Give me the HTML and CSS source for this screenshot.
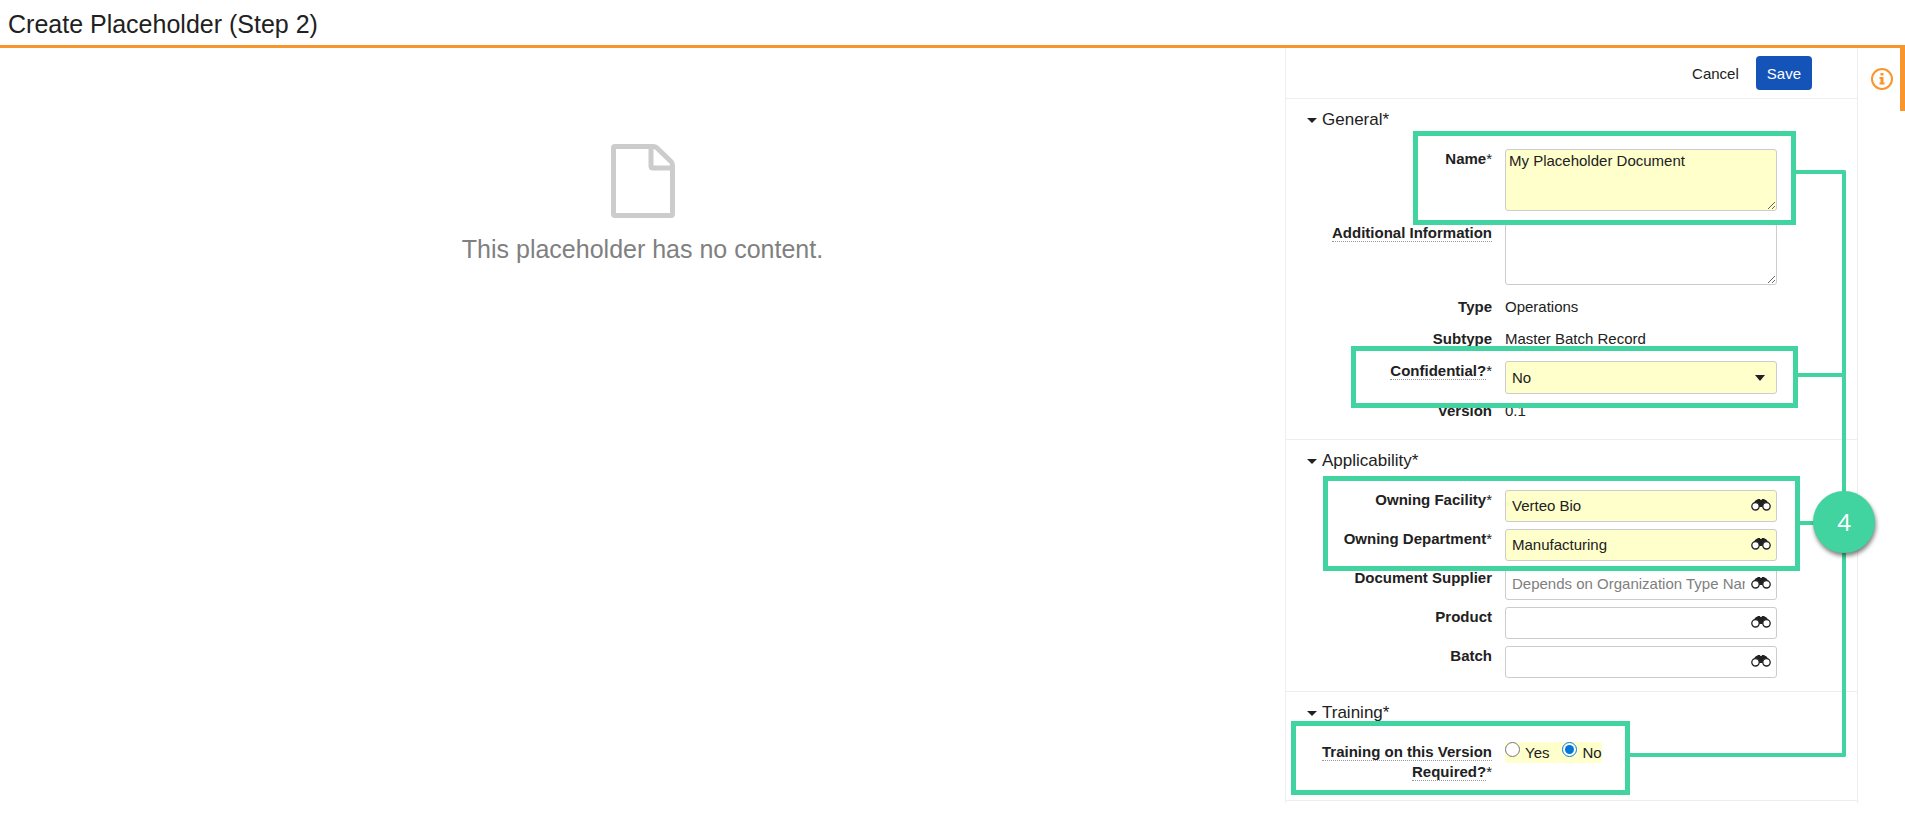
FILE: index.html
```
<!DOCTYPE html>
<html lang="en">
<head>
    <meta charset="UTF-8">
    <meta name="viewport" content="width=device-width, initial-scale=1.0">
    <title>Create Placeholder</title>
    <link rel="stylesheet" href="styles.css">
</head>
<body>
    <svg class="sprite" aria-hidden="true">
        <symbol id="binoculars" viewBox="0 0 20 12">
            <path d="M2.500 4 L4.500 1.500 Q5.500 0.800 6 0.800 L7 0 H9 L9.400 1 H10.600 L11 0 H13 L14 0.800 Q14.500 0.800 15.500 1.500 L17.500 4 L12 5 V8 H8 V5 Z"/>
            <circle cx="4.500" cy="7.300" r="3.700" fill="white" stroke="#212121" stroke-width="1.300"/>
            <circle cx="15.500" cy="7.300" r="3.700" fill="white" stroke="#212121" stroke-width="1.300"/>
        </symbol>
    </svg>

    <header class="page-header">
        <h1>Create Placeholder (Step 2)</h1>
    </header>

    <div class="page">
        <main class="viewer">
            <svg class="doc-icon" viewBox="0 0 64 74" width="64" height="74" aria-hidden="true">
                <path d="M4 2.500 H42 Q44.500 2.500 46 4 L60 17.500 Q61.500 19 61.500 21 V70 Q61.500 71.500 60 71.500 H4 Q2.500 71.500 2.500 70 V4 Q2.500 2.500 4 2.500 Z"/>
                <path d="M40 3 V22 Q40 24 42 24 H61"/>
            </svg>
            <p>This placeholder has no content.</p>
        </main>

        <form class="panel">
            <div class="actions">
                <button type="button" class="btn">Cancel</button>
                <button type="button" class="btn btn-save">Save</button>
            </div>

            <section class="section">
                <h2>General*</h2>
                <div class="row">
                    <label class="label" for="name">Name<i>*</i></label>
                    <textarea id="name" class="control required">My Placeholder Document</textarea>
                </div>
                <div class="row">
                    <label class="label" for="info"><span class="hint">Additional Information</span></label>
                    <textarea id="info" class="control"></textarea>
                </div>
                <div class="row">
                    <span class="label">Type</span>
                    <span class="value">Operations</span>
                </div>
                <div class="row">
                    <span class="label">Subtype</span>
                    <span class="value">Master Batch Record</span>
                </div>
                <div class="row">
                    <label class="label" for="confidential"><span class="hint">Confidential?</span><i>*</i></label>
                    <div class="select">
                        <select id="confidential" class="control required">
                            <option>No</option>
                            <option>Yes</option>
                        </select>
                    </div>
                </div>
                <div class="row">
                    <span class="label">Version</span>
                    <span class="value">0.1</span>
                </div>
            </section>

            <section class="section">
                <h2>Applicability*</h2>
                <div class="row">
                    <label class="label" for="facility">Owning Facility<i>*</i></label>
                    <div class="lookup">
                        <input type="text" id="facility" class="control required" value="Verteo Bio">
                        <button type="button" aria-label="Search"><svg><use href="#binoculars"/></svg></button>
                    </div>
                </div>
                <div class="row">
                    <label class="label" for="department">Owning Department<i>*</i></label>
                    <div class="lookup">
                        <input type="text" id="department" class="control required" value="Manufacturing">
                        <button type="button" aria-label="Search"><svg><use href="#binoculars"/></svg></button>
                    </div>
                </div>
                <div class="row">
                    <label class="label" for="supplier">Document Supplier</label>
                    <div class="lookup">
                        <input type="text" id="supplier" class="control" placeholder="Depends on Organization Type Name">
                        <button type="button" aria-label="Search"><svg><use href="#binoculars"/></svg></button>
                    </div>
                </div>
                <div class="row">
                    <label class="label" for="product">Product</label>
                    <div class="lookup">
                        <input type="text" id="product" class="control">
                        <button type="button" aria-label="Search"><svg><use href="#binoculars"/></svg></button>
                    </div>
                </div>
                <div class="row">
                    <label class="label" for="batch">Batch</label>
                    <div class="lookup">
                        <input type="text" id="batch" class="control">
                        <button type="button" aria-label="Search"><svg><use href="#binoculars"/></svg></button>
                    </div>
                </div>
            </section>

            <section class="section">
                <h2>Training*</h2>
                <div class="row" role="radiogroup" aria-labelledby="training-label">
                    <span class="label" id="training-label"><span class="hint">Training on this Version</span> <span class="hint">Required?</span><i>*</i></span>
                    <div class="radios">
                        <label><input type="radio" name="training">Yes</label>
                        <label><input type="radio" name="training" checked>No</label>
                    </div>
                </div>
            </section>

            <!-- step callouts -->
            <div class="line line-main"></div>
            <div class="line line-confidential"></div>
            <div class="line line-owning"></div>
            <div class="box box-name"></div>
            <div class="box box-confidential"></div>
            <div class="box box-owning"></div>
            <div class="box box-training"></div>
            <div class="line line-training"></div>
            <div class="step">4</div>
        </form>

        <aside class="rail">
            <button type="button" class="info" aria-label="Information">
                <svg viewBox="0 0 22 22" width="22" height="22">
                    <circle cx="11" cy="11" r="10"/>
                    <path d="M9.500 5 H12.500 V7.500 H9.500 Z M8.500 9 H12.500 V14.500 H13.500 V16.500 H8.500 V14.500 H9.500 V11 H8.500 Z"/>
                </svg>
            </button>
        </aside>
    </div>
</body>
</html>
```
FILE: styles.css
```
* {
    box-sizing: border-box;
}
body {
    margin: 0;
    font-family: Arial, "Liberation Sans", sans-serif;
    font-size: 15px;
    line-height: 20px;
    color: #212121;
    background: white;
}
button, input, select, textarea {
    font: inherit;
    color: inherit;
}
button {
    padding: 0;
    border: none;
    background: none;
    cursor: pointer;
}
.sprite {
    display: none;
}
.page-header {
    padding: 10px 8px 7px;
    border-bottom: 3px solid #f8962d;
}
.page-header h1 {
    margin: 0;
    font-size: 25px;
    line-height: 28px;
    font-weight: normal;
}
.page {
    display: flex;
    align-items: flex-start;
}
.viewer {
    flex: 1;
    padding-top: 96px;
    text-align: center;
    font-size: 25px;
    line-height: 30px;
    color: #808080;
}
.viewer p {
    margin: 16px 0 0;
}
.doc-icon {
    display: block;
    margin: 0 auto;
    fill: none;
    stroke: #ccc;
    stroke-width: 5;
}

/* form panel */
.panel {
    position: relative;
    width: 573px;
    padding-bottom: 2px;
    border: solid #eee;
    border-width: 0 1px;
}
.actions {
    display: flex;
    justify-content: flex-end;
    align-items: center;
    gap: 7px;
    height: 51px;
    padding-right: 45px;
    border-bottom: 1px solid #eee;
}
.btn {
    height: 34px;
    padding: 1px 10px 0;
    border-radius: 4px;
}
.btn-save {
    padding: 1px 11px 0;
    background: #1453b8;
    color: white;
}
.section {
    padding-bottom: 6px;
    border-bottom: 1px solid #eee;
}
.section h2 {
    display: flex;
    align-items: center;
    gap: 5px;
    margin: 0;
    padding: 9px 0 17px 21px;
    font-size: 17px;
    line-height: 24px;
    font-weight: normal;
}
.section h2::before {
    content: "";
    border: 5px solid transparent;
    border-top-color: #212121;
    border-bottom: none;
}
.row {
    display: grid;
    grid-template-columns: 206px 272px;
    column-gap: 13px;
    align-items: start;
    margin-bottom: 7px;
}
.label {
    padding: 0 0 5px 30px;
    text-align: right;
    font-weight: bold;
}
.label i {
    font-style: normal;
    font-weight: normal;
}
.hint {
    border-bottom: 1px dotted #999;
}
.control {
    display: block;
    width: 100%;
    height: 32px;
    padding: 0 6px;
    border: 1px solid #ccc;
    border-radius: 3px;
    background: white;
}
.required {
    background: #ffffcc;
}
textarea.control {
    height: 62px;
    margin-bottom: 5px;
    padding: 1px 3px;
}
.select {
    position: relative;
}
.select select {
    appearance: none;
    height: 33px;
}
.select::after {
    content: "";
    position: absolute;
    top: 14px;
    right: 12px;
    border: 5px solid transparent;
    border-top: 6px solid #212121;
    border-bottom: none;
    pointer-events: none;
}
.lookup {
    position: relative;
}
.lookup input {
    padding: 0 31px 2px 6px;
}
.lookup input::placeholder {
    color: #808080;
}
.lookup button {
    position: absolute;
    top: 9px;
    right: 6px;
}
.lookup svg {
    display: block;
    width: 20px;
    height: 12px;
    fill: #212121;
}
.radios {
    display: flex;
    gap: 13px;
    justify-self: start;
    border-radius: 3px;
    background: #ffffcc;
}
.radios label {
    display: flex;
    gap: 5px;
    line-height: 21px;
}
.radios input {
    width: 15px;
    height: 15px;
    margin: 0;
    accent-color: #0078d4;
}

/* right rail */
.rail {
    width: 47px;
    height: 63px;
    padding: 20px 0 0 13px;
    border-right: 5px solid #f8962d;
}
.info svg {
    display: block;
    fill: #f8962d;
}
.info circle {
    fill: none;
    stroke: #f8962d;
    stroke-width: 2;
}

/* callouts */
.box, .line, .step {
    position: absolute;
    pointer-events: none;
}
.box {
    border: 5px solid #41d3a0;
}
.box-name {
    top: 83px;
    left: 127px;
    width: 383px;
    height: 94px;
}
.box-confidential {
    top: 298px;
    left: 65px;
    width: 447px;
    height: 62px;
}
.box-owning {
    top: 428px;
    left: 37px;
    width: 477px;
    height: 95px;
}
.box-training {
    top: 673px;
    left: 5px;
    width: 339px;
    height: 74px;
}
.line {
    right: 11px;
    height: 4px;
    background: #41d3a0;
}
.line-main {
    top: 122px;
    left: 510px;
    height: 587px;
    border: solid #41d3a0;
    border-width: 4px 4px 0 0;
    border-radius: 0 2px 2px 0;
    background: none;
}
.line-confidential {
    top: 325px;
    left: 512px;
}
.line-owning {
    top: 473px;
    left: 514px;
}
.line-training {
    top: 705px;
    left: 344px;
    border-radius: 0 0 2px 0;
}
.step {
    top: 443px;
    left: 527px;
    z-index: 1;
    width: 62px;
    height: 62px;
    border-radius: 50%;
    background: #41d3a0;
    box-shadow: 1px 3px 4px rgba(0, 0, 0, 0.5);
    color: white;
    font-family: "Open Sans", sans-serif;
    font-size: 24px;
    line-height: 62px;
    text-align: center;
}
```
